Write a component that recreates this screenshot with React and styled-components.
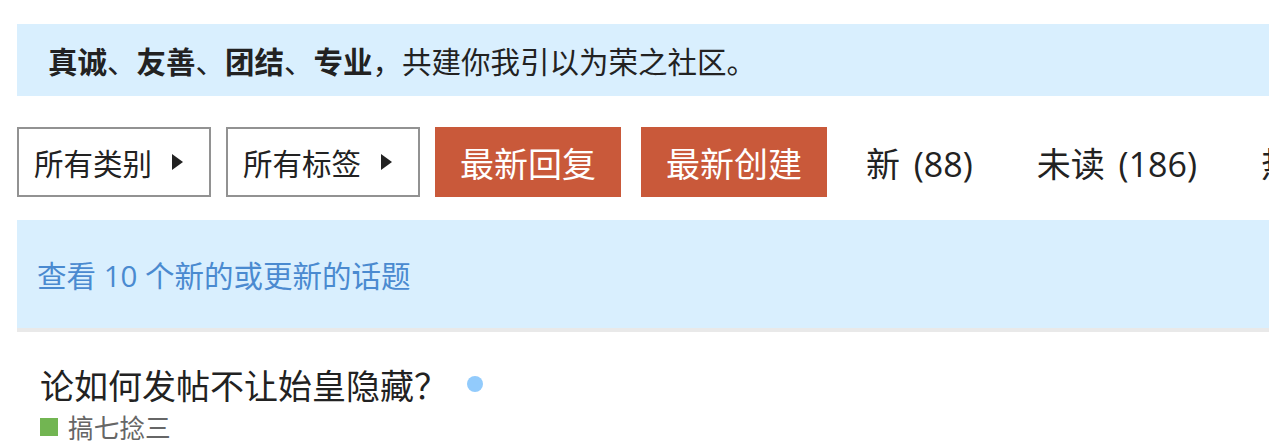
import React from 'react';
import styled, { createGlobalStyle } from 'styled-components';

const GlobalStyle = createGlobalStyle`
  html, body {
    margin: 0;
    padding: 0;
    background: #fff;
    overflow: hidden;
  }
  body {
    font-family: "Open Sans", "Noto Sans CJK SC", sans-serif;
    font-size: 29.5px;
    color: #222;
  }
`;

const Page = styled.div`
  width: 1500px;
  padding: 24px 0 0 17px;
`;

const Banner = styled.div`
  display: flex;
  align-items: center;
  height: 72px;
  padding-left: 31px;
  background: #d9effe;
  font-size: 29.5px;
  color: #222;

  b {
    font-weight: 700;
  }
`;

const NavRow = styled.div`
  display: flex;
  align-items: stretch;
  height: 70px;
  margin-top: 31px;
`;

const Dropdown = styled.div`
  display: flex;
  align-items: center;
  box-sizing: border-box;
  width: 194px;
  height: 70px;
  margin-right: 15px;
  padding-left: 15px;
  border: 2px solid #929292;
  background: #fff;
  font-size: 29.5px;
  white-space: nowrap;
`;

const Caret = styled.svg`
  width: 11px;
  height: 16px;
  margin-left: 20px;
  fill: #222;
`;

const Pills = styled.ul`
  display: flex;
  gap: 20px;
  margin: 0;
  padding: 0;
  list-style: none;
`;

const Pill = styled.li`
  display: flex;
  align-items: center;
  padding: ${(p) => (p.$active ? '0 25px' : '0 25px 0 19px')};
  background: ${(p) => (p.$active ? '#c9593a' : 'transparent')};
  color: ${(p) => (p.$active ? '#fff' : '#222')};
  font-size: 34px;
  word-spacing: 5px;
  white-space: nowrap;
`;

const Alert = styled.div`
  display: flex;
  align-items: center;
  height: 108px;
  margin-top: 23px;
  padding-left: 20px;
  background: #d9effe;
  border-bottom: 4px solid #e9e9e9;
  color: #4a8ad0;
  font-size: 29.5px;
`;

const TopicRow = styled.div`
  padding: 30px 0 0 23px;
`;

const Title = styled.div`
  display: flex;
  align-items: center;
  height: 44px;
  font-size: 34px;
  color: #222;
`;

const NewDot = styled.span`
  width: 16px;
  height: 16px;
  margin-left: 19px;
  border-radius: 50%;
  background: #92cbfc;
`;

const Category = styled.div`
  display: flex;
  align-items: center;
  height: 33px;
  margin-top: 4px;
  font-size: 25.7px;
  color: #666;
`;

const Swatch = styled.span`
  width: 18px;
  height: 18px;
  margin-right: 10px;
  background: ${(p) => p.$color};
`;

const CaretRight = () => (
  <Caret viewBox="0 0 11 16">
    <polygon points="0,0 11,8 0,16" />
  </Caret>
);

const pills = [
  { label: '最新回复', active: true },
  { label: '最新创建', active: true },
  { label: '新 (88)' },
  { label: '未读 (186)' },
  { label: '热门' },
];

export default function App() {
  return (
    <>
      <GlobalStyle />
      <Page>
        <Banner>
          <span>
            <b>真诚</b>、<b>友善</b>、<b>团结</b>、<b>专业</b>，共建你我引以为荣之社区。
          </span>
        </Banner>

        <NavRow>
          <Dropdown>
            所有类别
            <CaretRight />
          </Dropdown>
          <Dropdown>
            所有标签
            <CaretRight />
          </Dropdown>
          <Pills>
            {pills.map((p) => (
              <Pill key={p.label} $active={p.active}>
                {p.label}
              </Pill>
            ))}
          </Pills>
        </NavRow>

        <Alert>查看 10 个新的或更新的话题</Alert>

        <TopicRow>
          <Title>
            论如何发帖不让始皇隐藏？
            <NewDot />
          </Title>
          <Category>
            <Swatch $color="#72b552" />
            搞七捻三
          </Category>
        </TopicRow>
      </Page>
    </>
  );
}
